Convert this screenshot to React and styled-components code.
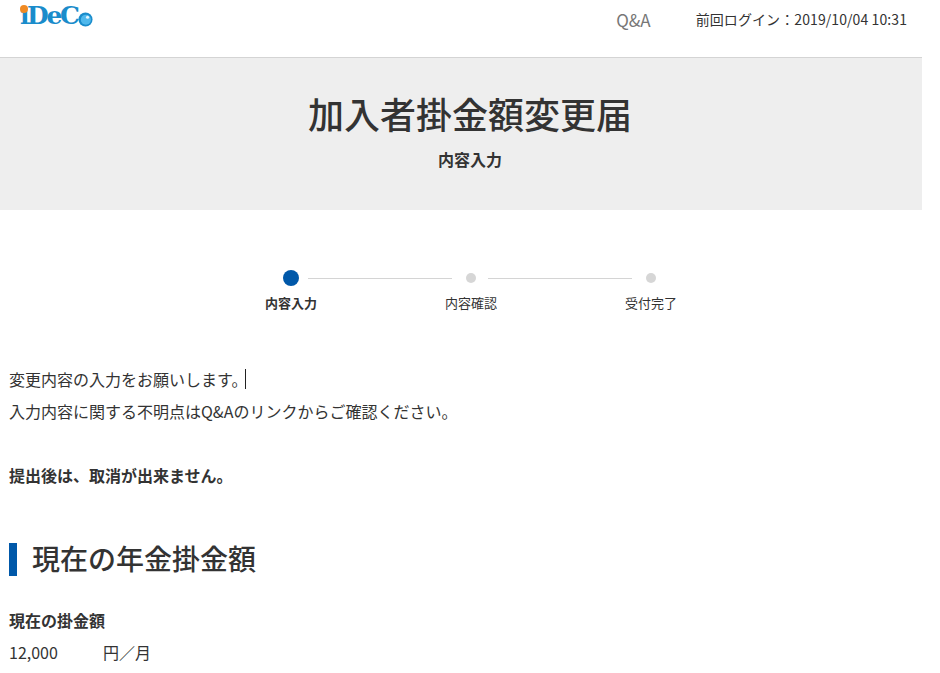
import React from 'react'
import styled, { createGlobalStyle } from 'styled-components'

const Global = createGlobalStyle`
  html, body { margin: 0; padding: 0; background: #fff; overflow: hidden; }
  body {
    font-family: "Noto Sans CJK JP", "Liberation Sans", sans-serif;
    color: #333;
  }
`

const steps = [
  { label: '内容入力', active: true },
  { label: '内容確認' },
  { label: '受付完了' },
]

function LogoBall() {
  return (
    <BallSvg viewBox="0 0 16 16" width="15" height="15" aria-hidden="true">
      <circle cx="8" cy="8" r="7.5" fill="#1a8ccb" />
      <circle cx="8.4" cy="8.2" r="5.4" fill="#4fb8ec" />
      <circle cx="10.2" cy="5.6" r="1.7" fill="#e4f5fd" />
    </BallSvg>
  )
}

function App() {
  return (
    <Page>
      <Global />
      <Header>
        <Logo>
          <LogoDot />
          <LogoText>ıDeC</LogoText>
          <LogoBall />
        </Logo>
        <HeaderRight>
          <QaLink>Q&amp;A</QaLink>
          <LastLogin>前回ログイン：2019/10/04 10:31</LastLogin>
        </HeaderRight>
      </Header>

      <Band>
        <BandTitle>加入者掛金額変更届</BandTitle>
        <BandSub>内容入力</BandSub>
      </Band>

      <Stepper>
        {steps.map((s, i) => (
          <Step key={s.label}>
            <DotRow>
              <Dot $active={s.active} />
              {i < steps.length - 1 && <StepLine $active={s.active} />}
            </DotRow>
            <StepLabel $active={s.active}>{s.label}</StepLabel>
          </Step>
        ))}
      </Stepper>

      <Content>
        <Line>変更内容の入力をお願いします。<Caret /></Line>
        <Line>入力内容に関する不明点はQ&amp;Aのリンクからご確認ください。</Line>
        <Notice>提出後は、取消が出来ません。</Notice>
        <SectionTitle>現在の年金掛金額</SectionTitle>
        <FieldLabel>現在の掛金額</FieldLabel>
        <FieldValue>
          <Amount>12,000</Amount>
          <span>円／月</span>
        </FieldValue>
      </Content>
    </Page>
  )
}

export default App

const Page = styled.div`
  width: 940px;
  height: 673px;
  overflow: hidden;
`

const Header = styled.header`
  width: 922px;
  height: 57px;
  box-sizing: border-box;
  display: flex;
  justify-content: space-between;
  align-items: flex-start;
  padding: 0 15px 0 20px;
`

const Logo = styled.div`
  position: relative;
  display: flex;
  align-items: flex-end;
  height: 32px;
`

const LogoText = styled.span`
  font-family: "DejaVu Serif", serif;
  font-weight: 700;
  font-size: 25px;
  line-height: 32px;
  letter-spacing: -2.4px;
  color: #1a8ccb;
`

const LogoDot = styled.span`
  position: absolute;
  left: 0;
  top: 5px;
  width: 8px;
  height: 8px;
  border-radius: 50%;
  background: #f08a24;
`

const BallSvg = styled.svg`
  margin: 0 0 5px 1px;
  flex: none;
`

const HeaderRight = styled.div`
  display: flex;
  align-items: center;
  height: 38px;
`

const QaLink = styled.span`
  font-size: 17px;
  color: #777;
  margin-right: 45px;
`

const LastLogin = styled.span`
  font-size: 14px;
  letter-spacing: 0.09px;
  color: #333;
`

const Band = styled.section`
  width: 922px;
  height: 153px;
  box-sizing: border-box;
  padding-left: 18px;
  border-top: 1px solid #d4d4d4;
  background: #eeeeee;
  text-align: center;
`

const BandTitle = styled.h1`
  margin: 31px 0 0;
  font-size: 36px;
  line-height: 48px;
  font-weight: 500;
  color: #333;
`

const BandSub = styled.p`
  margin: 12px 0 0;
  font-size: 16px;
  line-height: 20px;
  font-weight: 700;
  color: #333;
`

const Stepper = styled.ol`
  list-style: none;
  margin: 0;
  padding: 60px 0 0 2px;
  height: 93px;
  display: flex;
  justify-content: center;
`

const Step = styled.li`
  width: 180px;
  display: flex;
  flex-direction: column;
  align-items: center;
`

const DotRow = styled.div`
  position: relative;
  height: 16px;
  display: flex;
  align-items: center;
`

const Dot = styled.span`
  width: ${p => (p.$active ? '16px' : '10px')};
  height: ${p => (p.$active ? '16px' : '10px')};
  border-radius: 50%;
  background: ${p => (p.$active ? '#0058a9' : '#d6d6d6')};
`

const StepLine = styled.span`
  position: absolute;
  left: ${p => (p.$active ? '25px' : '22px')};
  top: 8px;
  width: 144px;
  height: 1px;
  background: #d4d4d4;
`

const StepLabel = styled.span`
  margin-top: 8px;
  font-size: 13px;
  line-height: 18px;
  font-weight: ${p => (p.$active ? 700 : 400)};
  color: #333;
`

const Content = styled.main`
  padding-left: 9px;
`

const Line = styled.p`
  margin: 0;
  height: 32px;
  font-size: 16px;
  line-height: 32px;
  display: flex;
  align-items: center;
`

const Caret = styled.span`
  width: 1px;
  height: 20px;
  margin-left: -2px;
  background: #222;
`

const Notice = styled.p`
  margin: 32px 0 0;
  font-size: 16px;
  line-height: 32px;
  font-weight: 700;
`

const SectionTitle = styled.h2`
  margin: 52px 0 0;
  height: 33px;
  padding-left: 15px;
  border-left: 8px solid #0058a9;
  font-size: 28px;
  line-height: 31px;
  font-weight: 500;
  color: #333;
`

const FieldLabel = styled.p`
  margin: 29px 0 0;
  font-size: 16px;
  line-height: 30px;
  font-weight: 700;
`

const FieldValue = styled.div`
  display: flex;
  margin-top: 1px;
  font-size: 16px;
  line-height: 32px;
`

const Amount = styled.span`
  width: 94px;
`
